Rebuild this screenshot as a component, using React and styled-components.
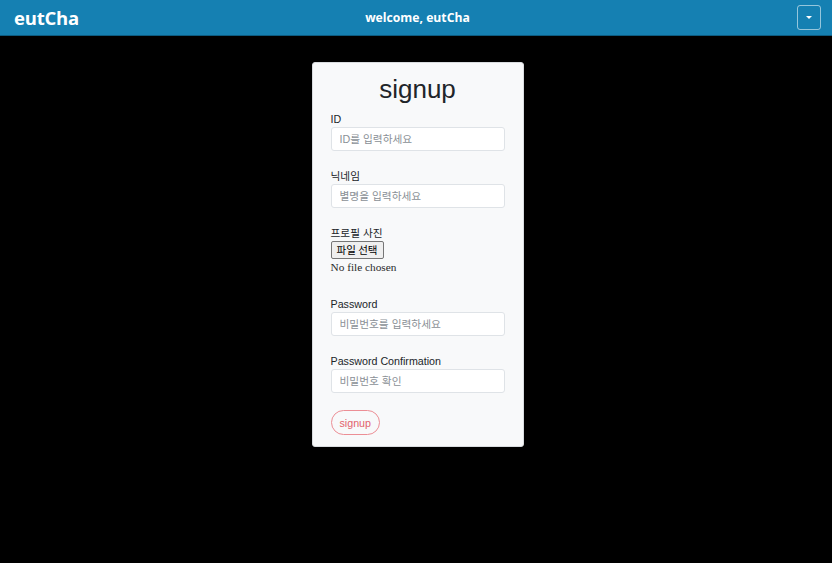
import styled, { createGlobalStyle } from "styled-components";

const GlobalStyle = createGlobalStyle`
    html, body {
        margin: 0;
        padding: 0;
        background: #000;
        font-family: "Liberation Sans", Arial, "Noto Sans CJK KR", sans-serif;
        color: #212529;
    }
`;

const fields = [
    {label: "ID", placeholder: "ID를 입력하세요"},
    {label: "닉네임", placeholder: "별명을 입력하세요"},
];

const passwordFields = [
    {label: "Password", placeholder: "비밀번호를 입력하세요", type: "password"},
    {label: "Password Confirmation", placeholder: "비밀번호 확인", type: "password"},
];

function App() {
    return (
        <Page>
            <GlobalStyle/>
            <NavBar>
                <Brand>eutCha</Brand>
                <Welcome>welcome, eutCha</Welcome>
                <ToggleWrapper>
                    <Toggle type="button" aria-label="menu">
                        <Caret/>
                    </Toggle>
                </ToggleWrapper>
            </NavBar>
            <Main>
                <Card>
                    <Title>signup</Title>
                    {fields.map(f => (
                        <FormGroup key={f.label}>
                            <Label>{f.label}</Label>
                            <Input placeholder={f.placeholder}/>
                        </FormGroup>
                    ))}
                    <FormGroup $gap={22}>
                        <Label>프로필 사진</Label>
                        <FileButton type="button">파일 선택</FileButton>
                        <FileStatus>No file chosen</FileStatus>
                    </FormGroup>
                    {passwordFields.map(f => (
                        <FormGroup key={f.label}>
                            <Label>{f.label}</Label>
                            <Input type={f.type} placeholder={f.placeholder}/>
                        </FormGroup>
                    ))}
                    <SubmitButton type="button">signup</SubmitButton>
                </Card>
            </Main>
        </Page>
    );
}

const Page = styled.div`
    min-height: 563px;
    background: #000;
`;

const NavBar = styled.nav`
    display: grid;
    grid-template-columns: 1fr auto 1fr;
    align-items: center;
    height: 35px;
    padding: 0 11px 0 14px;
    background: #1580b2;
    border-bottom: 1px solid #0c5b80;
    font-family: "Open Sans", "Liberation Sans", sans-serif;
    color: #fff;
`;

const Brand = styled.div`
    font-size: 18.5px;
    font-weight: 700;
    letter-spacing: -0.2px;
`;

const Welcome = styled.div`
    font-size: 12.2px;
    font-weight: 700;
`;

const ToggleWrapper = styled.div`
    display: flex;
    justify-content: flex-end;
`;

const Toggle = styled.button`
    display: flex;
    align-items: center;
    justify-content: center;
    width: 24px;
    height: 25px;
    padding: 0;
    background: transparent;
    border: 1px solid rgba(255, 255, 255, 0.55);
    border-radius: 3px;
`;

const Caret = styled.span`
    width: 0;
    height: 0;
    border-left: 3px solid transparent;
    border-right: 3px solid transparent;
    border-top: 3px solid #fff;
`;

const Main = styled.main`
    display: flex;
    justify-content: center;
    padding: 26px 0 0 3px;
`;

const Card = styled.div`
    display: flex;
    flex-direction: column;
    align-items: flex-start;
    width: 212px;
    box-sizing: border-box;
    padding: 11px 18px 11px;
    background: #f8f9fa;
    border: 1px solid #d9dcdf;
    border-radius: 3px;
`;

const Title = styled.h1`
    align-self: stretch;
    margin: 0 0 6px;
    font-size: 26px;
    font-weight: 400;
    line-height: 31px;
    text-align: center;
    color: #212529;
`;

const FormGroup = styled.div`
    display: flex;
    flex-direction: column;
    align-items: flex-start;
    align-self: stretch;
    margin-bottom: ${p => p.$gap ?? 17}px;
`;

const Label = styled.label`
    font-size: 10.7px;
    line-height: 16px;
    color: #212529;
`;

const Input = styled.input`
    align-self: stretch;
    box-sizing: border-box;
    height: 24px;
    padding: 0 8px;
    font-family: "Liberation Sans", "Noto Sans CJK KR", sans-serif;
    font-size: 10.7px;
    color: #495057;
    background: #fff;
    border: 1px solid #dfe3e7;
    border-radius: 3px;
    outline: none;

    &::placeholder {
        color: #8a9096;
    }
`;

const FileButton = styled.button`
    height: 18px;
    padding: 0 5px;
    font-family: "Noto Sans CJK KR", sans-serif;
    font-size: 10.5px;
    line-height: 16px;
    color: #000;
    background: #efefef;
    border: 1px solid #767676;
    border-radius: 2px;
`;

const FileStatus = styled.div`
    margin-top: 1px;
    font-family: "Liberation Serif", serif;
    font-size: 11.3px;
    font-weight: 400;
    line-height: 14px;
    color: #2a2a2a;
`;

const SubmitButton = styled.button`
    height: 25px;
    padding: 0 8px;
    font-family: "Liberation Sans", sans-serif;
    font-size: 10.7px;
    color: #e2626d;
    background: transparent;
    border: 1px solid #ec8e95;
    border-radius: 13px;
`;

export default App
